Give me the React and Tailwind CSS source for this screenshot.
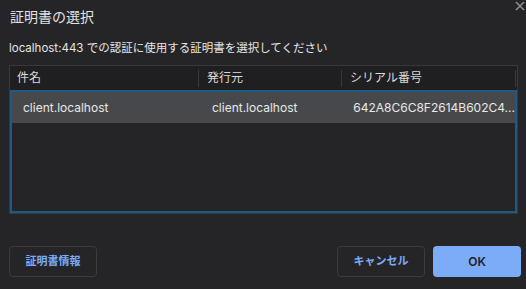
const cert = {
  subject: 'client.localhost',
  issuer: 'client.localhost',
  serial: '642A8C6C8F2614B602C4...',
}

export default function App() {
  return (
    <div
      className="relative h-[289px] w-[526px] overflow-hidden bg-[#252527] text-[#e3e3e3]"
      style={{ fontFamily: 'Inter, "Noto Sans CJK JP", sans-serif' }}
    >
      <svg className="absolute left-[515px] top-[1px]" width="10" height="10" viewBox="0 0 10 10">
        <path d="M1 1 L9 9 M9 1 L1 9" stroke="#8d8d90" strokeWidth="1.6" />
      </svg>

      <div className="px-[10px] pt-[7px] text-[14px] leading-[20px]">証明書の選択</div>
      <div className="mt-[13px] px-[9px] text-[11.5px] leading-[16px] text-[#e6e6e6]">
        localhost:443 での認証に使用する証明書を選択してください
      </div>

      <div className="mx-[9px] mt-[9px] flex h-[149px] w-[509px] flex-col border border-[#38383b]">
        <div className="flex h-[24px] shrink-0 items-center bg-[#1f1f21] text-[12px] text-[#dcdcdc]">
          <div className="w-[188px] pl-[7px]">件名</div>
          <div className="flex h-[17px] w-[143px] items-center border-l border-[#3a3a3d] pl-[8px]">発行元</div>
          <div className="flex h-[17px] flex-1 items-center border-l border-[#3a3a3d] pl-[8px]">シリアル番号</div>
          <div className="h-[17px] w-[2px] border-l border-[#3a3a3d]" />
        </div>
        <div className="flex-1 border-2 border-[#1e5a86]">
          <div className="flex h-[31px] items-center bg-[#47484b] text-[12px] text-[#e8e8e8]">
            <div className="w-[187px] pl-[11px]">{cert.subject}</div>
            <div className="w-[143px] pl-[14px]">{cert.issuer}</div>
            <div className="flex-1 whitespace-nowrap pl-[13px]">{cert.serial}</div>
          </div>
        </div>
      </div>

      <div className="mt-[32px] flex items-center px-[9px]">
        <button className="h-[31px] w-[88px] rounded-[4px] border border-[#3b3b3e] text-[11px] font-semibold text-[#7cacf8]">
          証明書情報
        </button>
        <div className="flex-1" />
        <button className="h-[31px] w-[88px] rounded-[4px] border border-[#3b3b3e] text-[11px] font-semibold text-[#7cacf8]">
          キャンセル
        </button>
        <button className="ml-[8px] mr-[-4px] h-[31px] w-[88px] rounded-[4px] bg-[#7cacf8] text-[12px] font-semibold text-[#1f1f21]">
          OK
        </button>
      </div>
    </div>
  )
}
